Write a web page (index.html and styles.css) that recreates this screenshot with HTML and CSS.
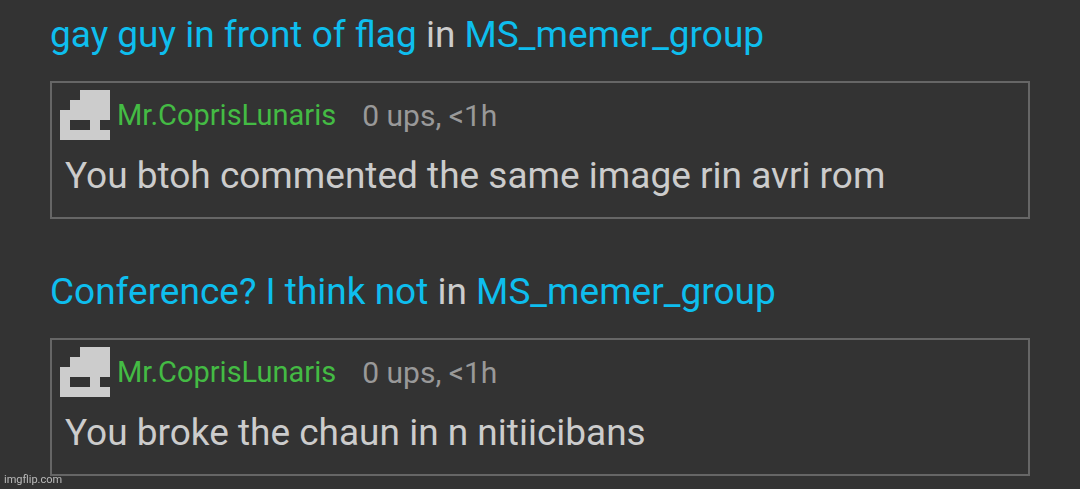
FILE: index.html
```html
<!DOCTYPE html>
<html lang="en">
<head>
<meta charset="utf-8">
<title>Comments</title>
<link rel="stylesheet" href="styles.css">
</head>
<body>
<main class="feed">
  <section class="entry">
    <h2 class="entry-title"><a href="#">gay guy in front of flag</a> in <a href="#">MS_memer_group</a></h2>
    <article class="comment">
      <header class="comment-head">
        <svg class="avatar" viewBox="0 0 50 50" aria-hidden="true"><path fill-rule="evenodd" d="M20 0H50V50H0V20H10V10H20ZM10 30V40H30V30ZM40 30V40H50V30Z"/></svg>
        <a class="author" href="#">Mr.CoprisLunaris</a>
        <span class="meta">0 ups, &lt;1h</span>
      </header>
      <p class="comment-text">You btoh commented the same image rin avri rom</p>
    </article>
  </section>
  <section class="entry">
    <h2 class="entry-title"><a href="#">Conference? I think not</a> in <a href="#">MS_memer_group</a></h2>
    <article class="comment">
      <header class="comment-head">
        <svg class="avatar" viewBox="0 0 50 50" aria-hidden="true"><path fill-rule="evenodd" d="M20 0H50V50H0V20H10V10H20ZM10 30V40H30V30ZM40 30V40H50V30Z"/></svg>
        <a class="author" href="#">Mr.CoprisLunaris</a>
        <span class="meta">0 ups, &lt;1h</span>
      </header>
      <p class="comment-text">You broke the chaun in n nitiicibans</p>
    </article>
  </section>
</main>
<div class="watermark">imgflip.com</div>
</body>
</html>
```
FILE: styles.css
```css
body {
  margin: 0;
  background: #333;
  color: #ccc;
  font-family: Roboto, sans-serif;
}

a {
  color: #0ebeee;
  text-decoration: none;
}

.feed {
  padding: 13px 50px 0;
}

.entry {
  margin-bottom: 51px;
}

.entry:last-child {
  margin-bottom: 0;
}

.entry-title {
  margin: 0 0 24px;
  font-size: 37px;
  font-weight: 400;
  line-height: 44px;
}

.comment {
  padding: 7px 8px 19px;
  border: 2px solid #666;
}

.comment-head {
  display: flex;
  align-items: center;
}

.avatar {
  width: 50px;
  height: 50px;
  margin-right: 7px;
  fill: #ccc;
}

.author {
  margin-right: 26px;
  color: #4b4;
  font-size: 29px;
}

.meta {
  color: #999;
  font-size: 30px;
}

.comment-text {
  margin: 14px 5px 0;
  font-size: 37px;
  line-height: 44px;
}

.watermark {
  position: fixed;
  bottom: 2px;
  left: 4px;
  color: #bbb;
  font-size: 11px;
  line-height: 14px;
}
```
